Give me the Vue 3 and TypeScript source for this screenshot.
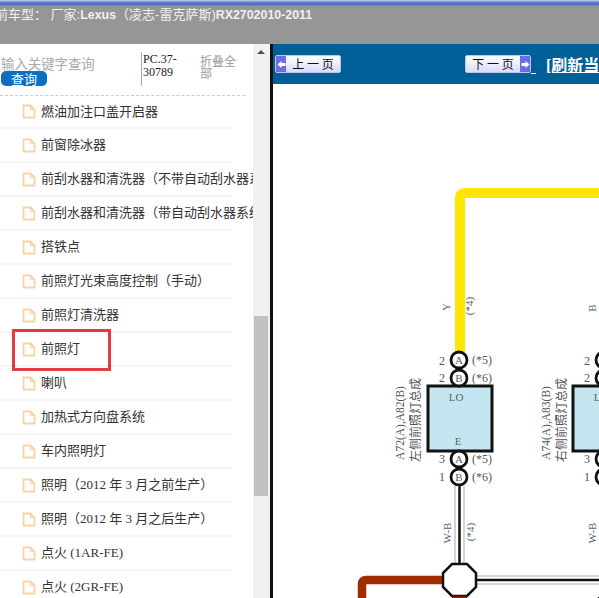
<script setup lang="ts">
const items: string[] = [
  '燃油加注口盖开启器', '前窗除冰器', '前刮水器和清洗器（不带自动刮水器系统）', '前刮水器和清洗器（带自动刮水器系统）',
  '搭铁点', '前照灯光束高度控制（手动）', '前照灯清洗器', '前照灯', '喇叭', '加热式方向盘系统', '车内照明灯',
  '照明（2012 年 3 月之前生产）', '照明（2012 年 3 月之后生产）', '点火 (1AR-FE)', '点火 (2GR-FE)',
]
</script>

<template>
  <div class="page">
    <header class="top">
      <div class="title"><span class="cn">前车型： 厂家:</span>Lexus<span class="cn">（凌志-雷克萨斯)</span>RX2702010-2011</div>
    </header>
    <div class="main">
      <aside class="side">
        <div class="side-body">
          <div class="search">
            <div class="query">
              <div class="placeholder">输入关键字查询</div>
              <button class="go">查询</button>
            </div>
            <div class="code">PC.37-<br />30789</div>
            <div class="fold">折叠全部</div>
          </div>
          <ul class="list">
            <li v-for="item in items" :key="item" class="row">
              <svg class="doc" width="14" height="15" viewBox="0 0 14 15">
                <path d="M1.5 1.5h7l4 4v8h-11z" fill="#fff" stroke="#f8d3a6" stroke-width="1.8" stroke-linejoin="round" />
                <path d="M8.5 1.5v4h4" fill="none" stroke="#f8d3a6" stroke-width="1.2" />
              </svg>
              <span class="label">{{ item }}</span>
            </li>
          </ul>
          <div class="mark"></div>
        </div>
        <div class="scrollbar">
          <span class="up"></span>
          <span class="thumb"></span>
        </div>
      </aside>
      <section class="content">
        <div class="bar">
          <button class="pager">
            <span class="arrow">
              <svg width="9" height="9" viewBox="0 0 9 9"><path d="M0.5 4.5L4.5 1v2h4v3h-4v2z" fill="#fff" /></svg>
            </span>
            <span class="pager-text">上 一 页</span>
          </button>
          <button class="pager next">
            <span class="pager-text">下 一 页</span>
            <span class="arrow">
              <svg width="9" height="9" viewBox="0 0 9 9"><path d="M8.5 4.5L4.5 1v2h-4v3h4v2z" fill="#fff" /></svg>
            </span>
          </button>
          <span class="gap-line"></span>
          <a class="refresh">[刷新当前页]</a>
        </div>
        <svg class="diagram" width="326" height="514" viewBox="273 84 326 514">
          <path d="M460 352V198Q460 193 465 193H599" fill="none" stroke="#ffe600" stroke-width="10" />
          <g class="wire-box">
            <rect x="428" y="386" width="64" height="65" />
            <rect x="573" y="386" width="40" height="65" />
          </g>
          <g class="pin">
            <circle cx="459" cy="360" r="8" />
            <circle cx="459" cy="378" r="8" />
            <circle cx="459" cy="459" r="8" />
            <circle cx="459" cy="477" r="8" />
            <circle cx="604" cy="360" r="8" />
            <circle cx="604" cy="378" r="8" />
            <circle cx="604" cy="459" r="8" />
            <circle cx="604" cy="477" r="8" />
            <circle cx="604" cy="606" r="9" />
          </g>
          <path d="M442 580H366Q362 580 362 584V598" fill="none" stroke="#a12c00" stroke-width="8.5" />
          <path d="M459.5 486V564" stroke="#aaa" stroke-width="10" fill="none" />
          <path d="M459.5 486V564" stroke="#fff" stroke-width="8" fill="none" />
          <path d="M459.5 486V564" stroke="#111" stroke-width="2.5" fill="none" />
          <path d="M476 580H599" stroke="#aaa" stroke-width="9" fill="none" />
          <path d="M476 580H599" stroke="#fff" stroke-width="7" fill="none" />
          <path d="M476 580H599" stroke="#111" stroke-width="2.5" fill="none" />
          <path d="M452 564H467L476 573V587L467 596H452L443 587V573Z" fill="#fff" stroke="#111" stroke-width="2.5" />
          <path d="M452 597H467" stroke="#7a2000" stroke-width="2" />
          <g class="t">
            <text x="442" y="365" text-anchor="middle">2</text>
            <text x="442" y="382" text-anchor="middle">2</text>
            <text x="442" y="463" text-anchor="middle">3</text>
            <text x="442" y="481" text-anchor="middle">1</text>
            <text x="472" y="364">(*5)</text>
            <text x="472" y="382">(*6)</text>
            <text x="472" y="463">(*5)</text>
            <text x="472" y="481">(*6)</text>
            <text x="587" y="365" text-anchor="middle">2</text>
            <text x="587" y="382" text-anchor="middle">2</text>
            <text x="587" y="463" text-anchor="middle">3</text>
            <text x="587" y="481" text-anchor="middle">1</text>
            <text x="459" y="364" text-anchor="middle" class="s">A</text>
            <text x="459" y="382" text-anchor="middle" class="s">B</text>
            <text x="459" y="463" text-anchor="middle" class="s">A</text>
            <text x="459" y="481" text-anchor="middle" class="s">B</text>
            <text x="456" y="401" text-anchor="middle" class="s">LO</text>
            <text x="458" y="445" text-anchor="middle" class="s">E</text>
            <text x="601" y="401" text-anchor="middle" class="s">LO</text>
            <text transform="translate(450 307) rotate(-90)" text-anchor="middle" class="s">Y</text>
            <text transform="translate(473 306) rotate(-90)" text-anchor="middle" class="s">(*4)</text>
            <text transform="translate(596 308) rotate(-90)" text-anchor="middle" class="s">B</text>
            <text transform="translate(451 533) rotate(-90)" text-anchor="middle" class="s">W-B</text>
            <text transform="translate(474 532) rotate(-90)" text-anchor="middle" class="s">(*4)</text>
            <text transform="translate(596 533) rotate(-90)" text-anchor="middle" class="s">W-B</text>
            <text transform="translate(404 423) rotate(-90)" text-anchor="middle" class="l">A72(A),A82(B)</text>
            <text transform="translate(420 420) rotate(-90)" text-anchor="middle" class="cjk">左侧前照灯总成</text>
            <text transform="translate(550 423) rotate(-90)" text-anchor="middle" class="l">A74(A),A83(B)</text>
            <text transform="translate(566 420) rotate(-90)" text-anchor="middle" class="cjk">右侧前照灯总成</text>
          </g>
        </svg>
      </section>
    </div>
  </div>
</template>

<style>
html, body { margin: 0; overflow: hidden; }
</style>

<style scoped>
.page {
  width: 599px;
  height: 598px;
  display: flex;
  flex-direction: column;
  overflow: hidden;
  background: #fff;
  font-family: "Noto Sans CJK SC", sans-serif;
}
.top {
  height: 44px;
  flex: none;
  box-sizing: border-box;
  background: linear-gradient(#c6d2ee 0, #4f6fc4 3px, #5474c6 5px, #969696 6px);
  padding-top: 5px;
  overflow: hidden;
}
.title {
  margin-left: -5px;
  color: #f0f0f0;
  font: bold 12.4px/19px "Liberation Sans", "Noto Sans CJK SC", sans-serif;
  white-space: pre;
}
.cn { font-size: 13px; font-weight: 400; }
.main { flex: 1; display: flex; min-height: 0; }
.side { width: 270px; flex: none; display: flex; }
.side-body { position: relative; width: 253px; flex: none; overflow: hidden; }
.search { height: 43px; padding-top: 8px; display: flex; border-bottom: 1px dashed #ccc; width: 245px; box-sizing: content-box; }
.query { width: 141px; padding: 2px 0 0 1px; box-sizing: border-box; flex: none; }
.placeholder { color: #aaa; font-size: 13.4px; line-height: 18px; white-space: nowrap; }
.go {
  display: block;
  width: 46px;
  height: 15px;
  padding: 0;
  border: 0;
  border-radius: 5px;
  margin-top: -1px;
  background: #0d6fc4;
  color: #fff;
  font: 13px/15px "Noto Sans CJK SC", sans-serif;
}
.code {
  width: 59px;
  height: 34px;
  flex: none;
  box-sizing: border-box;
  border-left: 1px solid #aaa;
  padding: 1px 0 0 1px;
  color: #222;
  font: 12px/13px "Liberation Serif", serif;
}
.fold { width: 40px; padding-top: 3px; color: #999; font-size: 12px; line-height: 12px; }
.list { list-style: none; margin: 0; padding: 0; }
.row {
  height: 32px;
  margin-right: 21px;
  border-bottom: 2px solid #f6f6f6;
  display: flex;
  align-items: center;
  white-space: nowrap;
  color: #333;
  font: 13px/18px "Liberation Serif", "Noto Sans CJK SC", serif;
}
.row:first-child { height: 31px; }
.doc { margin-left: 22px; margin-right: 5px; flex: none; }
.label { display: block; width: 212px; overflow: hidden; margin-right: -21px; flex: none; }
.mark {
  position: absolute;
  left: 12px;
  top: 285px;
  width: 93px;
  height: 36px;
  border: 3px solid #e53b3f;
}
.scrollbar { position: relative; width: 17px; flex: none; background: #f1f1f1; }
.up {
  position: absolute;
  left: 4px;
  top: 6px;
  border: 4px solid transparent;
  border-top: 0;
  border-bottom: 4px solid #505050;
}
.thumb {
  position: absolute;
  left: 1px;
  top: 272px;
  width: 14px;
  height: 180px;
  background: #c1c1c1;
}
.content { flex: 1; min-width: 0; border-left: 3px solid #111; display: flex; flex-direction: column; }
.bar {
  height: 40px;
  flex: none;
  background: #005f96;
  display: flex;
  align-items: center;
  white-space: nowrap;
  overflow: hidden;
  padding-left: 2px;
}
.pager {
  width: 66px;
  height: 18px;
  padding: 0;
  flex: none;
  display: flex;
  align-items: stretch;
  border: 1px solid #b9c6ee;
  border-radius: 2px;
  background: linear-gradient(#fff, #d8dcfa);
  color: #111;
  font: 12px/16px "Noto Sans CJK SC", sans-serif;
}
.pager.next { margin-left: 124px; }
.arrow {
  width: 10px;
  flex: none;
  display: flex;
  align-items: center;
  justify-content: center;
  background: #6c6ce8;
}
.pager-text { flex: 1; text-align: center; white-space: pre; }
.gap-line { width: 5px; height: 1px; background: #fff; align-self: flex-end; margin-bottom: 10px; flex: none; }
.refresh {
  margin: 4px 0 0 10px;
  color: #fff;
  font: bold 16px/20px "Liberation Serif", "Noto Sans CJK SC", serif;
  text-decoration: underline;
}
.diagram { display: block; flex: none; }
.wire-box rect { fill: #c5e6f0; stroke: #111; stroke-width: 3; }
.pin circle { fill: #fff; stroke: #111; stroke-width: 2.8; }
.t text { font: 12px "Liberation Serif", serif; fill: #555; }
.t text.s { font-size: 11px; fill: #4f666b; }
.t text.l { font-size: 11.5px; fill: #555; }
.t text.cjk { font: 12px "Noto Sans CJK SC", sans-serif; fill: #555; }
</style>
